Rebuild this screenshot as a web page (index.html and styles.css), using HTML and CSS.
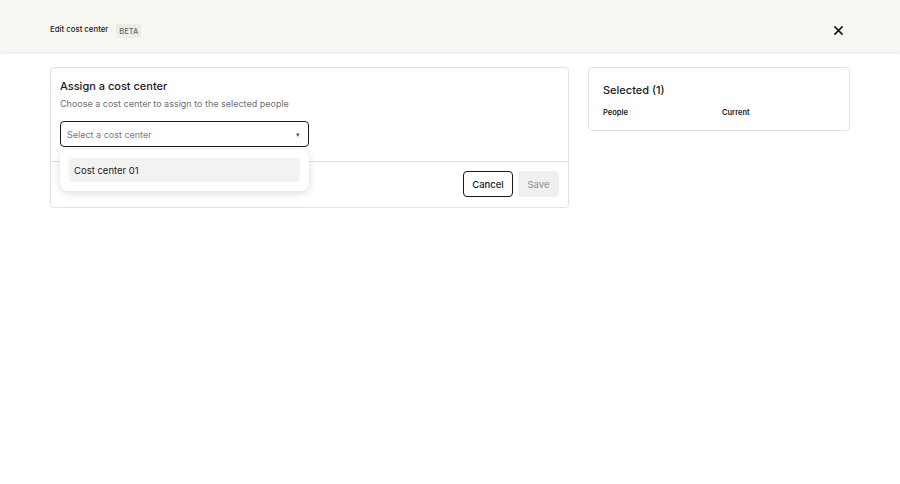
FILE: index.html
```html
<!DOCTYPE html>
<html lang="en">
<head>
    <meta charset="UTF-8">
    <meta name="viewport" content="width=device-width, initial-scale=1.0">
    <title>Edit cost center</title>
    <link rel="stylesheet" href="styles.css">
</head>
<body>
    <header class="topbar">
        <div class="topbar-title">
            <span>Edit cost center</span>
            <span class="beta-badge">BETA</span>
        </div>
        <button type="button" class="close-btn" aria-label="Close">
            <svg width="9" height="9" viewBox="0 0 10 10">
                <path d="M1 1 L9 9 M9 1 L1 9" stroke="#111" stroke-width="1.7" stroke-linecap="round"/>
            </svg>
        </button>
    </header>

    <main class="content">
        <section class="assign-card">
            <div class="assign-body">
                <h1 class="card-title">Assign a cost center</h1>
                <p class="card-description">Choose a cost center to assign to the selected people</p>

                <div class="select-wrap">
                    <div class="select-box">
                        <span class="select-placeholder">Select a cost center</span>
                        <span class="select-arrow">&#9662;</span>
                    </div>
                    <div class="select-menu">
                        <div class="select-option">Cost center 01</div>
                    </div>
                </div>
            </div>

            <div class="assign-footer">
                <button type="button" class="cancel-btn">Cancel</button>
                <button type="button" class="save-btn" disabled>Save</button>
            </div>
        </section>

        <aside class="selected-card">
            <h2 class="card-title">Selected (1)</h2>
            <div class="selected-head">
                <span>People</span>
                <span>Current</span>
            </div>
        </aside>
    </main>
</body>
</html>
```

FILE: styles.css
```css
* {
    margin: 0;
    padding: 0;
    box-sizing: border-box;
    font-family: 'Inter', 'Liberation Sans', sans-serif;
}

body {
    background-color: #FFFFFF;
    color: #1A1A1A;
    width: 900px;
    height: 484px;
    overflow: hidden;
}

.topbar {
    height: 52px;
    background-color: #F7F7F2;
    box-shadow: 0 1px 3px rgba(0, 0, 0, 0.12);
    display: flex;
    align-items: center;
    justify-content: space-between;
    padding: 8px 57px 0 50px;
    position: relative;
    z-index: 1;
}

.topbar-title {
    display: flex;
    align-items: center;
    gap: 8px;
    font-size: 7.8px;
    font-weight: 500;
    color: #1A1A1A;
    margin-top: -2px;
}

.beta-badge {
    background-color: #EDEDE8;
    color: #6B6B66;
    font-size: 7.5px;
    font-weight: 500;
    padding: 3px 3px 2px;
    border-radius: 2px;
    margin-top: 4px;
}

.close-btn {
    background: none;
    border: none;
    width: 9px;
    height: 9px;
    display: flex;
    cursor: pointer;
}

.content {
    display: flex;
    align-items: flex-start;
    gap: 19px;
    padding: 15px 50px;
}

.assign-card {
    flex: 1;
    border: 1px solid #E2E2E0;
    border-radius: 4px;
    background-color: #FFFFFF;
}

.assign-body {
    padding: 10px 9px 14px;
    border-bottom: 1px solid #E2E2E0;
}

.card-title {
    font-size: 11px;
    font-weight: 500;
    line-height: 16px;
    color: #1A1A1A;
}

.card-description {
    font-size: 9px;
    line-height: 14px;
    color: #707070;
    margin-top: 3px;
}

.select-wrap {
    position: relative;
    width: 249px;
    margin-top: 10px;
}

.select-box {
    height: 26px;
    border: 1.5px solid #1A1A1A;
    border-radius: 4px;
    display: flex;
    align-items: center;
    justify-content: space-between;
    padding: 0 8px 0 6px;
}

.select-placeholder {
    font-size: 9px;
    color: #7A7A7A;
}

.select-arrow {
    font-size: 7px;
    color: #555555;
}

.select-menu {
    position: absolute;
    top: 29px;
    left: 0;
    width: 249px;
    background-color: #FFFFFF;
    border-radius: 8px;
    box-shadow: 0 2px 8px rgba(0, 0, 0, 0.14);
    padding: 8px 9px 9px;
    z-index: 2;
}

.select-option {
    height: 24px;
    background-color: #F2F2F0;
    border-radius: 4px;
    display: flex;
    align-items: center;
    padding-left: 5px;
    font-size: 9.5px;
    color: #1A1A1A;
}

.assign-footer {
    display: flex;
    justify-content: flex-end;
    gap: 5px;
    padding: 9px 9px 10px;
}

.cancel-btn,
.save-btn {
    height: 26px;
    border-radius: 4px;
    font-size: 9.5px;
    font-weight: 500;
}

.cancel-btn {
    width: 50px;
    background-color: #FFFFFF;
    border: 1px solid #1A1A1A;
    color: #1A1A1A;
}

.save-btn {
    width: 41px;
    background-color: #F0F0EF;
    border: none;
    color: #9A9A9A;
}

.selected-card {
    width: 262px;
    border: 1px solid #E2E2E0;
    border-radius: 4px;
    padding: 14px 14px 13px;
}

.selected-head {
    display: grid;
    grid-template-columns: 119px 1fr;
    font-size: 7.5px;
    font-weight: 600;
    color: #1A1A1A;
    margin-top: 10px;
}
```
